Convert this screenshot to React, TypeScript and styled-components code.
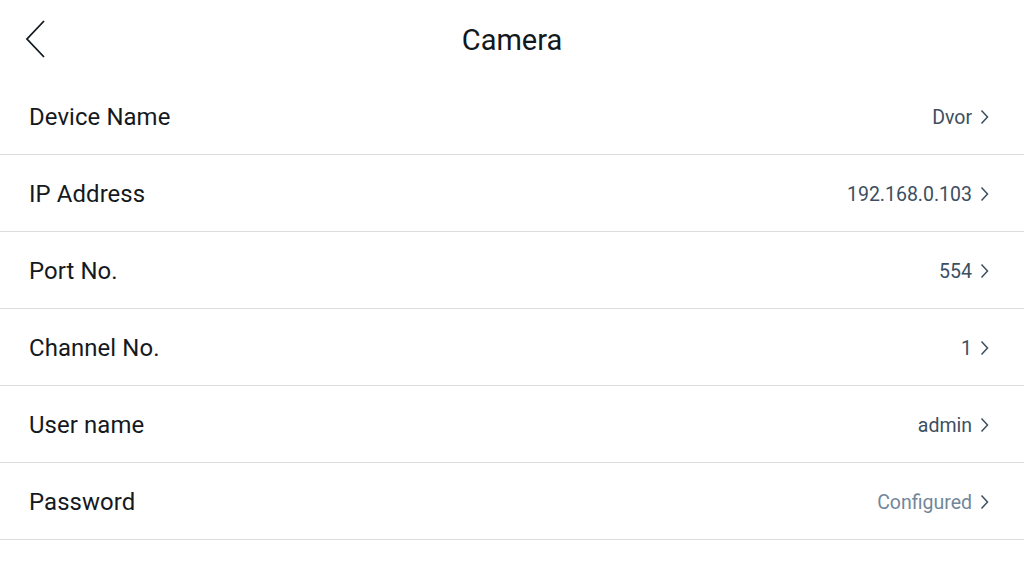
import React from "react";
import styled, { createGlobalStyle } from "styled-components";

const Global = createGlobalStyle`
  html, body { margin: 0; padding: 0; background: #ffffff; }
  body { font-family: Roboto, "Noto Sans", "Liberation Sans", sans-serif; }
`;

const Page = styled.div`
  width: 1024px;
  height: 579px;
  background: #ffffff;
  display: flex;
  flex-direction: column;
  overflow: hidden;
`;

const Header = styled.header`
  height: 78px;
  display: grid;
  grid-template-columns: 80px 1fr 80px;
  align-items: center;
`;

const BackButton = styled.button`
  border: none;
  background: transparent;
  padding: 0 0 0 24px;
  height: 78px;
  display: flex;
  align-items: center;
  cursor: pointer;
`;

const Title = styled.h1`
  margin: 0;
  text-align: center;
  font-size: 29px;
  font-weight: 400;
  color: #111820;
  padding-top: 2px;
`;

const List = styled.div`
  display: flex;
  flex-direction: column;
`;

const Row = styled.div`
  display: flex;
  align-items: center;
  justify-content: space-between;
  padding: 2px 35px 0 29px;
  box-sizing: border-box;
  height: 77px;
  border-bottom: 1px solid #dcdcdc;
`;

const Label = styled.span`
  font-size: 23.9px;
  color: #15191e;
  letter-spacing: 0.1px;
`;

const ValueWrap = styled.span<{ $muted?: boolean }>`
  display: flex;
  align-items: center;
  gap: 8px;
  font-size: 19.5px;
  color: ${(p) => (p.$muted ? "#72879a" : "#3c4f60")};
`;

const Chevron = () => (
  <svg width="9" height="16" viewBox="0 0 9 16" fill="none">
    <path d="M1.5 1.5 L7.5 8 L1.5 14.5" stroke="#3c4f60" strokeWidth="1.5" />
  </svg>
);

const items: { label: string; value: string; muted?: boolean }[] = [
  { label: "Device Name", value: "Dvor" },
  { label: "IP Address", value: "192.168.0.103" },
  { label: "Port No.", value: "554" },
  { label: "Channel No.", value: "1" },
  { label: "User name", value: "admin" },
  { label: "Password", value: "Configured", muted: true },
];

export default function App() {
  return (
    <Page>
      <Global />
      <Header>
        <BackButton aria-label="Back">
          <svg width="22" height="40" viewBox="0 0 22 40" fill="none">
            <path d="M20 2 L3 20 L20 38" stroke="#111820" strokeWidth="1.8" />
          </svg>
        </BackButton>
        <Title>Camera</Title>
        <span />
      </Header>
      <List>
        {items.map((it) => (
          <Row key={it.label}>
            <Label>{it.label}</Label>
            <ValueWrap $muted={it.muted}>
              {it.value}
              <Chevron />
            </ValueWrap>
          </Row>
        ))}
      </List>
    </Page>
  );
}
